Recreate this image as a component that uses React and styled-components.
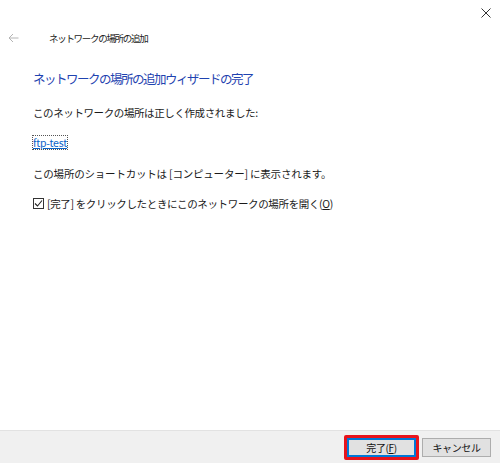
import React from 'react';
import styled, { createGlobalStyle } from 'styled-components';

const Global = createGlobalStyle`
  html, body { margin: 0; padding: 0; background: #fff; }
  body {
    font-family: "Noto Sans CJK JP", "Noto Sans", sans-serif;
    color: #1a1a1a;
  }
`;

const Window = styled.div`
  width: 500px;
  height: 465px;
  display: flex;
  flex-direction: column;
  background: #fff;
  box-sizing: border-box;
`;

const TitleBar = styled.div`
  height: 25px;
  display: flex;
  justify-content: flex-end;
  align-items: center;
  padding-right: 9px;
`;

const CloseIcon = styled.svg`
  width: 10px;
  height: 10px;
`;

const Header = styled.div`
  display: flex;
  align-items: center;
  height: 26px;
  padding-left: 8px;
  font-size: 9.5px;
  letter-spacing: -1.3px;
  color: #222;
`;

const BackIcon = styled.svg`
  width: 11px;
  height: 10px;
  margin-right: 30px;
`;

const Content = styled.div`
  flex: 1;
  padding: 19px 0 0 33px;
  display: flex;
  flex-direction: column;
`;

const Heading = styled.h1`
  margin: 0 0 18px;
  font-size: 12.5px;
  font-weight: normal;
  letter-spacing: -1.5px;
  color: #1f43b0;
  line-height: 17px;
`;

const Line = styled.p`
  margin: 0 0 15px;
  font-size: 10.5px;
  letter-spacing: -0.4px;
  line-height: 15px;
`;

const Bracket = styled(Line)`
  letter-spacing: -0.2px;
`;

const LinkBox = styled.a`
  align-self: flex-start;
  font-size: 10.5px;
  letter-spacing: -0.2px;
  line-height: 13px;
  color: #0a63c9;
  text-decoration: underline;
  outline: 1px dotted #555;
  margin: 1px 0 17px;
`;

const CheckRow = styled.label`
  display: flex;
  align-items: center;
  font-size: 10.5px;
  letter-spacing: -0.35px;
  line-height: 15px;
`;

const Box = styled.span`
  width: 11px;
  height: 11px;
  border: 1px solid #333;
  box-sizing: border-box;
  margin-right: 3px;
  display: flex;
  align-items: center;
  justify-content: center;
`;

const Footer = styled.div`
  height: 33px;
  margin-bottom: 2px;
  background: #f0f0f0;
  border-top: 1px solid #e2e2e2;
  box-sizing: border-box;
  display: flex;
  justify-content: flex-end;
  align-items: center;
  padding-right: 9px;
  gap: 3px;
`;

const Highlight = styled.div`
  border: 3px solid #e8141c;
  border-radius: 2px;
  display: flex;
`;

const Button = styled.button`
  width: 69px;
  height: 19px;
  padding: 0;
  box-sizing: border-box;
  background: #e1e1e1;
  border: ${p => (p.primary ? '2px solid #0078d7' : '1px solid #adadad')};
  font-family: "Noto Sans CJK JP", sans-serif;
  font-size: 10px;
  letter-spacing: -0.4px;
  color: #111;
  display: flex;
  align-items: center;
  justify-content: center;
`;

const Key = styled.span`
  text-decoration: underline;
`;

export default function App() {
  return (
    <Window>
      <Global />
      <TitleBar>
        <CloseIcon viewBox="0 0 10 10">
          <path d="M0.5 0.5 L9.5 9.5 M9.5 0.5 L0.5 9.5" stroke="#333" strokeWidth="1" />
        </CloseIcon>
      </TitleBar>
      <Header>
        <BackIcon viewBox="0 0 11 10">
          <path d="M10.5 5 H1 M5 1 L1 5 L5 9" stroke="#b4b4b4" strokeWidth="1" fill="none" />
        </BackIcon>
        ネットワークの場所の追加
      </Header>
      <Content>
        <Heading>ネットワークの場所の追加ウィザードの完了</Heading>
        <Line>このネットワークの場所は正しく作成されました:</Line>
        <LinkBox>ftp-test</LinkBox>
        <Bracket>この場所のショートカットは [コンピューター] に表示されます。</Bracket>
        <CheckRow>
          <Box>
            <svg width="9" height="9" viewBox="0 0 9 9">
              <path d="M1 4.5 L3.5 7 L8 1.5" stroke="#222" strokeWidth="1.1" fill="none" />
            </svg>
          </Box>
          [完了] をクリックしたときにこのネットワークの場所を開く(<Key>O</Key>)
        </CheckRow>
      </Content>
      <Footer>
        <Highlight>
          <Button primary>完了(<Key>F</Key>)</Button>
        </Highlight>
        <Button>キャンセル</Button>
      </Footer>
    </Window>
  );
}
